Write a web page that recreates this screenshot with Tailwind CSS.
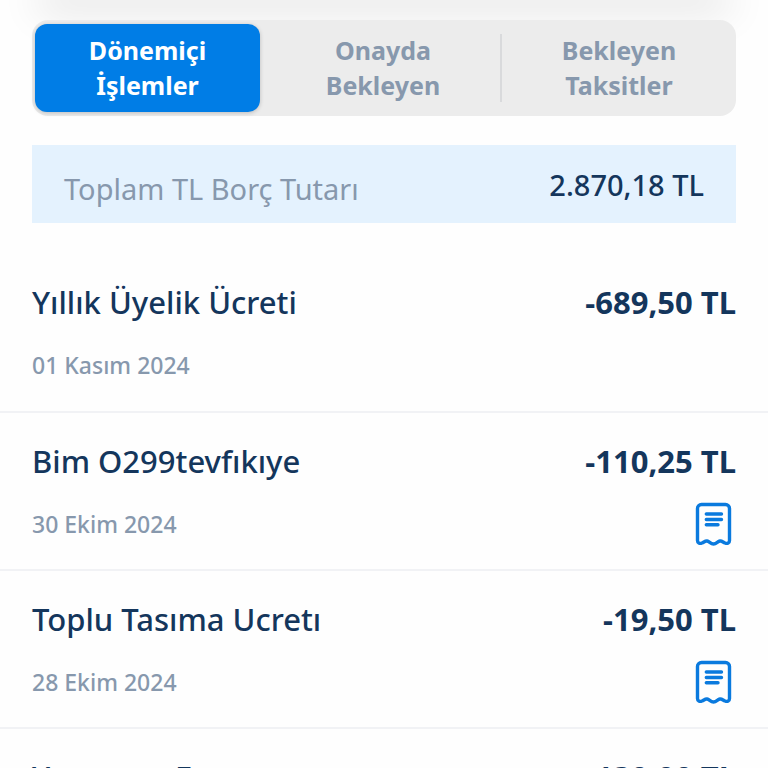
<!doctype html>
<html lang="tr">
<head>
  <meta charset="UTF-8">
  <meta name="viewport" content="width=device-width, initial-scale=1.0">
  <title>Kart Hareketleri</title>
  <script src="https://cdn.jsdelivr.net/npm/@tailwindcss/browser@4"></script>
</head>
<body class="h-screen overflow-hidden bg-[#fefefe] font-['Noto_Sans',sans-serif] text-[#14365c]">

<!-- header shadow -->
<header class="mx-12 h-0 shadow-[0_0_40px_10px_rgba(0,0,0,0.14)]"></header>

<main class="pt-5">
  <nav class="mx-8 grid h-24 grid-cols-[1fr_1fr_2px_1fr] rounded-2xl bg-[#ececec] text-[25px] leading-[35px] font-bold text-[#8798ad]">
    <button type="button" class="my-1 mr-1.5 ml-[3px] rounded-xl bg-[#007de6] text-white shadow-[0_1px_4px_rgba(0,0,0,0.2)]">Dönemiçi<br>İşlemler</button>
    <button type="button">Onayda<br>Bekleyen</button>
    <span class="my-3.5 bg-[#d9dadc]"></span>
    <button type="button">Bekleyen<br>Taksitler</button>
  </nav>

  <section class="mx-8 mt-[29px] flex h-[78px] items-start justify-between bg-[#e4f2fe] px-8 pt-5">
    <span class="pt-1 text-[29px] leading-10 text-[#8798ad]">Toplam TL Borç Tutarı</span>
    <span class="text-[29px] leading-10 font-medium">2.870,18 TL</span>
  </section>

  <ul class="mt-[31px]">
    <li class="h-[159px] border-b-2 border-[#f1f2f5] px-8 pt-[26px]">
      <div class="flex justify-between text-[31px] leading-[44px]">
        <span class="font-medium">Yıllık Üyelik Ücreti</span>
        <span class="font-bold">-689,50 TL</span>
      </div>
      <div class="mt-[17px] flex items-center justify-between">
        <time class="text-[23px] leading-[48px] font-medium text-[#8798ad]">01 Kasım 2024</time>
      </div>
    </li>
    <li class="h-[158px] border-b-2 border-[#f1f2f5] px-8 pt-[26px]">
      <div class="flex justify-between text-[31px] leading-[44px]">
        <span class="font-medium">Bim O299tevfıkıye</span>
        <span class="font-bold">-110,25 TL</span>
      </div>
      <div class="mt-[17px] flex items-center justify-between">
        <time class="text-[23px] leading-[48px] font-medium text-[#8798ad]">30 Ekim 2024</time>
        <button type="button" aria-label="Dekont">
          <svg class="h-12 w-11" viewBox="0 0 44 48" fill="none" stroke="#0a7ade" stroke-width="3.4" stroke-linecap="round" stroke-linejoin="round"><path d="M5.500 40.500V8.500a4 4 0 0 1 4-4H33.500a4 4 0 0 1 4 4V40.500C37.500 43 35.500 44 33 43C31 42.300 30 40.700 28 41C25.500 41.500 24.500 44 21.500 44S17.500 41.500 15 41C13 40.700 12 42.300 10 43C7.500 44 5.500 43 5.500 40.500Z"/><path d="M14.300 14H29.500M14.300 19.500H29.500M14.300 24.700H26"/></svg>
        </button>
      </div>
    </li>
    <li class="h-[158px] border-b-2 border-[#f1f2f5] px-8 pt-[26px]">
      <div class="flex justify-between text-[31px] leading-[44px]">
        <span class="font-medium">Toplu Tasıma Ucretı</span>
        <span class="font-bold">-19,50 TL</span>
      </div>
      <div class="mt-[17px] flex items-center justify-between">
        <time class="text-[23px] leading-[48px] font-medium text-[#8798ad]">28 Ekim 2024</time>
        <button type="button" aria-label="Dekont">
          <svg class="h-12 w-11" viewBox="0 0 44 48" fill="none" stroke="#0a7ade" stroke-width="3.4" stroke-linecap="round" stroke-linejoin="round"><path d="M5.500 40.500V8.500a4 4 0 0 1 4-4H33.500a4 4 0 0 1 4 4V40.500C37.500 43 35.500 44 33 43C31 42.300 30 40.700 28 41C25.500 41.500 24.500 44 21.500 44S17.500 41.500 15 41C13 40.700 12 42.300 10 43C7.500 44 5.500 43 5.500 40.500Z"/><path d="M14.300 14H29.500M14.300 19.500H29.500M14.300 24.700H26"/></svg>
        </button>
      </div>
    </li>
    <li class="h-[158px] border-b-2 border-[#f1f2f5] px-8 pt-[26px]">
      <div class="flex justify-between text-[31px] leading-[44px]">
        <span class="font-medium">Yemepay Ev</span>
        <span class="font-bold">-130,00 TL</span>
      </div>
    </li>
  </ul>
</main>

</body>
</html>
